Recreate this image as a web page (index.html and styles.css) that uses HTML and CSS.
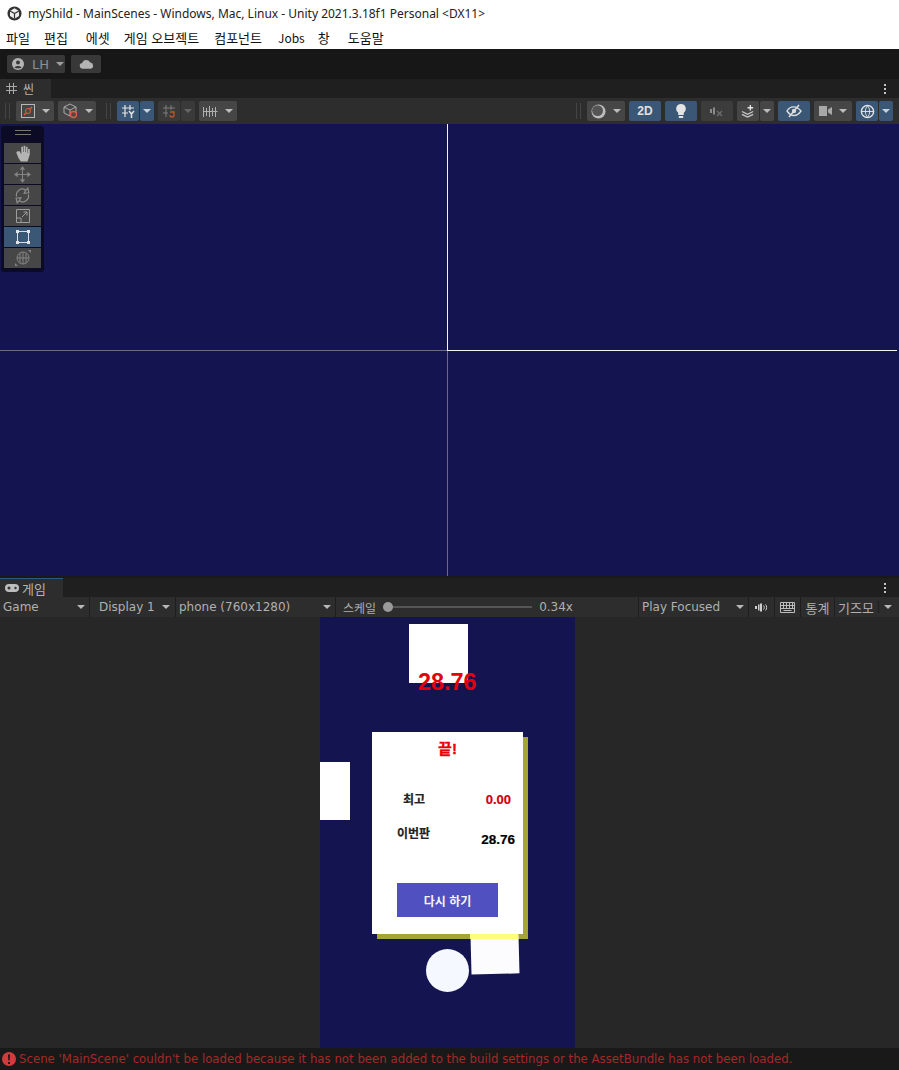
FILE: index.html
```html
<!DOCTYPE html>
<html lang="ko">
<head>
    <meta charset="UTF-8" />
    <title>myShild - MainScenes - Unity</title>
    <link rel="stylesheet" href="styles.css">
</head>
<body>

<header class="titlebar">
    <svg class="unity-logo" viewBox="0 0 16 16" width="15" height="15">
        <circle cx="8" cy="8" r="7.5" fill="#333"/>
        <path d="M8 2.500l4.800 2.800v5.400L8 13.500l-4.800-2.800V5.300z" fill="#eee"/>
        <path d="M8 8l4.800-2.700M8 8v5.500M8 8L3.200 5.300" stroke="#333" stroke-width="1.300"/>
    </svg>
    <span>myShild - MainScenes - Windows, Mac, Linux - Unity 2021.3.18f1 Personal &lt;DX11&gt;</span>
</header>
<nav class="menubar">
    <span class="m1">파일</span><span class="m2">편집</span><span class="m3">에셋</span><span class="m4">게임 오브젝트</span><span class="m5">컴포넌트</span><span class="m6">Jobs</span><span class="m7">창</span><span>도움말</span>
</nav>

<div class="maintoolbar">
    <div class="account">
        <svg viewBox="0 0 12 12" width="12" height="12"><circle cx="6" cy="6" r="6" fill="#b4b4b4"/><circle cx="6" cy="4.500" r="2" fill="#3a3a3a"/><path d="M2.500 9.500c1-2 6-2 7 0-1 1.200-6 1.200-7 0z" fill="#3a3a3a"/></svg>
        <span>LH</span><i class="caret"></i>
    </div>
    <div class="cloud">
        <svg viewBox="0 0 16 10" width="15" height="10"><path d="M4 10a3 3 0 0 1-.5-6A4.500 4.500 0 0 1 12 3.500 3.300 3.300 0 0 1 12.500 10z" fill="#b4b4b4"/></svg>
    </div>
</div>

<section class="panel-head scene-head">
    <div class="tab">
        <svg viewBox="0 0 11 11" width="11" height="11"><path d="M3.500 0v11M7.500 0v11M0 3.500h11M0 7.500h11" stroke="#aaa" fill="none"/></svg>
        <span>씬</span>
    </div>
    <div class="kebab"><b></b><b></b><b></b></div>
</section>

<div class="scene-toolbar">
    <i class="grip"></i>
    <div class="btn w38">
        <svg viewBox="0 0 14 14" width="14" height="14"><rect x=".5" y=".5" width="13" height="13" fill="none" stroke="#b8b8b8"/><path d="M3 11l8-8" stroke="#e0603c" stroke-width="1.200"/><circle cx="7" cy="7" r="2.500" fill="#464646" stroke="#e0603c"/></svg>
        <i class="caret"></i>
    </div>
    <div class="btn w38">
        <svg viewBox="0 0 16 16" width="16" height="16"><path d="M8 1l6 3v6l-6 3-6-3V4zM2 4l6 3 6-3M8 7v6" fill="none" stroke="#aaa"/><circle cx="11.500" cy="11.500" r="3" fill="#4a4a4a" stroke="#e0603c" stroke-width="1.300"/></svg>
        <i class="caret"></i>
    </div>
    <i class="grip grip-mid"></i>
    <div class="btn on w22">
        <svg viewBox="0 0 14 14" width="14" height="14"><path d="M4 1v12M9 1v5M1 4h12M1 9h6" stroke="#e4e4e4" fill="none" stroke-width="1.200"/><path d="M8 7l2.500 3L13 7M10.500 10v4" stroke="#e4e4e4" fill="none" stroke-width="1.500"/></svg>
    </div>
    <div class="btn on w14 sub"><i class="caret"></i></div>
    <div class="btn dim w22">
        <svg viewBox="0 0 14 14" width="14" height="14"><path d="M4 1v12M9 1v5M1 4h12M1 9h5" stroke="#7c7c7c" fill="none"/><path d="M8 8h4v3a2 2 0 0 1-4 0" stroke="#c0552f" fill="none" stroke-width="1.300"/></svg>
    </div>
    <div class="btn dim w14 sub"><i class="caret"></i></div>
    <div class="btn w38">
        <svg viewBox="0 0 15 13" width="15" height="13"><path d="M.5 2v10M3.500 3v8M6.500 1v11M9.500 3v8M12.500 2v10M.5 6.500h14" stroke="#b0b0b0" fill="none"/></svg>
        <i class="caret"></i>
    </div>

    <div class="spacer"></div>

    <i class="grip"></i>
    <div class="btn w38">
        <svg viewBox="0 0 16 16" width="15" height="15"><circle cx="8" cy="8" r="7.500" fill="#bcbcbc"/><circle cx="7" cy="7" r="5.800" fill="#555"/></svg>
        <i class="caret"></i>
    </div>
    <div class="btn on w32 label-2d">2D</div>
    <div class="btn on w32">
        <svg viewBox="0 0 12 15" width="12" height="15"><path d="M6 0a4.800 4.800 0 0 1 2.800 8.700V11H3.200V8.700A4.800 4.800 0 0 1 6 0z" fill="#e4e4e4"/><rect x="3.800" y="12" width="4.400" height="2" fill="#e4e4e4"/></svg>
    </div>
    <div class="btn off w32">
        <svg viewBox="0 0 14 12" width="14" height="12"><path d="M0 4h2v4H0zM3 2.500h2v7H3z" fill="#8a8a8a"/><path d="M7 6l5 5M12 6l-5 5" stroke="#6e6e6e" stroke-width="1.300"/></svg>
    </div>
    <div class="btn w22">
        <svg viewBox="0 0 16 14" width="15" height="13"><path d="M1 7l6 3 6-3M1 10l6 3 6-3" fill="none" stroke="#c8c8c8" stroke-width="1.500"/><path d="M10 0v6M7 3h6" stroke="#e4e4e4" stroke-width="1.500"/></svg>
    </div>
    <div class="btn w14 sub"><i class="caret"></i></div>
    <div class="btn on w32">
        <svg viewBox="0 0 16 14" width="16" height="14"><path d="M1 7c3-5 9-6 14 0-4 6-10 6-14 0z" fill="none" stroke="#ddd" stroke-width="1.400"/><circle cx="8" cy="7" r="2.200" fill="#ddd"/><path d="M3 13L13 1" stroke="#ddd" stroke-width="1.500"/></svg>
    </div>
    <div class="btn w38">
        <svg viewBox="0 0 13 10" width="13" height="10"><rect width="8" height="10" fill="#a8a8a8"/><path d="M9 3.500l4-2.500v8l-4-2.500z" fill="#a8a8a8"/></svg>
        <i class="caret"></i>
    </div>
    <div class="btn on w22">
        <svg viewBox="0 0 16 16" width="15" height="15"><circle cx="8" cy="8" r="6.500" fill="none" stroke="#e4e4e4" stroke-width="1.500"/><path d="M1.500 8h13M8 2c-3 3-3 9 0 12M8 2c3 3 3 9 0 12" fill="none" stroke="#e4e4e4"/></svg>
    </div>
    <div class="btn on w14 sub"><i class="caret"></i></div>
</div>

<main class="scene-view">
    <i class="axis-v"></i>
    <i class="axis-h"></i>
    <i class="axis-v2"></i>
    <i class="axis-h2"></i>
    <div class="tools">
        <i class="tools-grip"></i>
        <div class="tool">
            <svg viewBox="0 0 16 16" width="18" height="18"><path d="M2 7.500l2 5 2 3h6l2-6V4.500h-1.500V8H12V2.500h-1.500V7H10V1.500H8.500V7H8V2.500H6.500V9L5 6.500H3z" fill="#b4b4b4"/></svg>
        </div>
        <div class="tool">
            <svg viewBox="0 0 16 16" width="17" height="17"><path d="M8 0l2.500 3.500h-5zM8 16l2.500-3.500h-5zM0 8l3.500-2.500v5zM16 8l-3.500-2.500v5z" fill="#858585"/><path d="M8 3v10M3 8h10" stroke="#858585"/></svg>
        </div>
        <div class="tool">
            <svg viewBox="0 0 16 16" width="17" height="17"><path d="M2.500 9A5.500 5.500 0 0 1 11 3l-1.500 3 4.500-.500L13 1l-1.500 2M13.500 7A5.500 5.500 0 0 1 5 13l1.500-3-4.500.500L3 15l1.500-2" fill="none" stroke="#8c8c8c" stroke-width="1.100"/></svg>
        </div>
        <div class="tool">
            <svg viewBox="0 0 14 14" width="14" height="14"><path d="M.5.5h13v13H.5zM.5 9H5v4.500M6 8l5-5M7.500 3H11v3.500" fill="none" stroke="#9c9c9c"/></svg>
        </div>
        <div class="tool on">
            <svg viewBox="0 0 14 14" width="14" height="14"><rect x="1.500" y="1.500" width="11" height="11" fill="none" stroke="#dde" /><path d="M0 0h3v3H0zM11 0h3v3h-3zM0 11h3v3H0zM11 11h3v3h-3z" fill="#e4e4e4"/></svg>
        </div>
        <div class="tool">
            <svg viewBox="0 0 18 18" width="18" height="18"><circle cx="9" cy="9" r="6" fill="none" stroke="#858585"/><path d="M3 9h12M9 3v12M6 4v10M12 4v10" stroke="#858585" fill="none"/><path d="M14 1h3v3zM1 17v-3l3 3z" fill="#858585"/></svg>
        </div>
    </div>
</main>

<section class="panel-head game-head">
    <div class="tab tab-game">
        <svg viewBox="0 0 14 9" width="14" height="9"><rect width="14" height="8" rx="4" fill="#bdbdbd"/><circle cx="4" cy="4" r="1.500" fill="#333"/><circle cx="10.500" cy="4" r="1.200" fill="#333"/></svg>
        <span>게임</span>
    </div>
    <div class="kebab"><b></b><b></b><b></b></div>
</section>

<div class="game-toolbar">
    <div class="cell c-game"><span>Game</span><i class="caret"></i></div>
    <div class="cell c-display"><span>Display 1</span><i class="caret"></i></div>
    <div class="cell c-phone"><span>phone (760x1280)</span><i class="caret"></i></div>
    <div class="cell c-scale">
        <span>스케일</span>
        <div class="slider"><i></i></div>
        <span class="scale-val">0.34x</span>
    </div>
    <div class="cell c-play"><span>Play Focused</span><i class="caret"></i></div>
    <div class="cell c-icon">
        <svg viewBox="0 0 13 9" width="13" height="9"><path d="M0 3h2v3H0zM3 1.500h1.500v6H3zM5 .5h2v8H5z" fill="#cfcfcf"/><path d="M8.500 2.500c1 1 1 3 0 4M10.500 1.500c1.500 1.500 1.500 4.500 0 6" fill="none" stroke="#cfcfcf"/></svg>
    </div>
    <div class="cell c-icon">
        <svg viewBox="0 0 15 11" width="15" height="11"><path d="M.5.5h14v10H.5zM.5 3.500h14M.5 6.500h14M3.500.5v6M6.500.5v6M9.500.5v6M12.500.5v6M3.500 8.500h8" fill="none" stroke="#bdbdbd"/></svg>
    </div>
    <div class="cell c-stats"><span>통계</span></div>
    <div class="cell c-gizmo"><span>기즈모</span><i class="sep"></i><i class="caret"></i></div>
</div>

<main class="game-view">
    <div class="screen">
        <div class="block block-top"></div>
        <div class="score">28.76</div>
        <div class="block block-left"></div>
        <div class="card-shadow"></div>
        <div class="block block-tilt"></div>
        <div class="block block-yellow"></div>
        <div class="ball"></div>
        <div class="card">
            <div class="card-title">끝!</div>
            <div class="card-row row-best">
                <span>최고</span>
                <span class="val-red">0.00</span>
            </div>
            <div class="card-row row-now">
                <span>이번판</span>
                <span class="val-black">28.76</span>
            </div>
            <div class="retry">다시 하기</div>
        </div>
    </div>
</main>

<footer class="statusbar">
    <svg viewBox="0 0 14 14" width="14" height="14"><circle cx="7" cy="7" r="7" fill="#d13b3b"/><path d="M6 2.500h2l-.3 6H6.300zM6 10h2v2H6z" fill="#1a1a1a"/></svg>
    <span>Scene 'MainScene' couldn't be loaded because it has not been added to the build settings or the AssetBundle has not been loaded.</span>
</footer>

</body>
</html>
```

FILE: styles.css
```css
html, body {
    margin: 0;
    padding: 0;
}
body {
    width: 899px;
    height: 1070px;
    overflow: hidden;
    background: #191919;
    font-family: "DejaVu Sans", "Noto Sans CJK KR", sans-serif;
    font-size: 12px;
    color: #b4b4b4;
}
svg {
    display: block;
    flex: none;
}

/* windows title + menu */
.titlebar {
    height: 26px;
    background: #fff;
    color: #222;
    display: flex;
    align-items: center;
    gap: 6px;
    padding-left: 7px;
    font-family: "Noto Sans", "Noto Sans CJK KR", sans-serif;
    font-size: 12px;
}
.menubar {
    height: 23px;
    background: #fff;
    color: #111;
    display: flex;
    align-items: center;
    padding-left: 6px;
    font-family: "Noto Sans CJK KR", sans-serif;
    font-size: 13px;
}
.m1 { margin-right: 14px; }
.m2 { margin-right: 18px; }
.m3 { margin-right: 14px; }
.m4 { margin-right: 15px; }
.m5 { margin-right: 16px; }
.m6 { margin-right: 13px; font-size: 12px; }
.m7 { margin-right: 18px; }

.caret {
    display: block;
    flex: none;
    width: 0;
    height: 0;
    border-left: 4px solid transparent;
    border-right: 4px solid transparent;
    border-top: 4px solid #b8b8b8;
}

.maintoolbar {
    height: 30px;
    background: #171717;
    display: flex;
    align-items: center;
    gap: 6px;
    padding-left: 7px;
}
.account, .cloud {
    height: 18px;
    background: #383838;
    border-radius: 2px;
    display: flex;
    align-items: center;
    box-sizing: border-box;
}
.account {
    width: 58px;
    padding-left: 5px;
    gap: 8px;
    color: #8f8f8f;
    font-size: 13px;
}
.account .caret {
    margin-left: -1px;
    border-top-color: #a0a0a0;
}
.cloud {
    width: 30px;
    justify-content: center;
}

/* panel tabs */
.panel-head {
    height: 19px;
    background: #1f1f1f;
    display: flex;
    justify-content: space-between;
    align-items: stretch;
}
.tab {
    width: 51px;
    background: #2d2d2d;
    display: flex;
    align-items: center;
    gap: 6px;
    padding-left: 6px;
    box-sizing: border-box;
    font-family: "Noto Sans CJK KR", sans-serif;
}
.tab-game {
    width: 63px;
    padding-left: 5px;
    gap: 3px;
    border-top: 1px solid #2f5a7d;
    font-size: 13px;
}
.kebab {
    width: 29px;
    display: flex;
    flex-direction: column;
    align-items: center;
    justify-content: center;
    gap: 2px;
}
.kebab b {
    width: 2px;
    height: 2px;
    background: #c4c4c4;
}

.scene-toolbar {
    height: 26px;
    background: #2d2d2d;
    display: flex;
    align-items: center;
    padding-left: 5px;
    padding-right: 6px;
    box-sizing: border-box;
    gap: 4px;
}
.spacer {
    flex: 1;
}
.grip {
    width: 3px;
    height: 16px;
    border-left: 1px solid #444;
    border-right: 1px solid #444;
    margin-right: 2px;
}
.grip-mid {
    margin-left: 6px;
}
.btn {
    height: 20px;
    background: #464646;
    border-radius: 2px;
    display: flex;
    align-items: center;
    justify-content: center;
    gap: 7px;
    box-sizing: border-box;
    flex: none;
}
.btn.on { background: #3a5775; }
.btn.dim { background: #3a3a3a; }
.btn.off { background: #3c3c3c; }
.btn.dim .caret { border-top-color: #666; }
.btn .caret { border-top-color: #bcbcbc; }
.btn.on .caret { border-top-color: #c8d2dc; }
.w14 { width: 14px; }
.w22 { width: 22px; }
.w32 { width: 32px; }
.w38 { width: 38px; }
.sub { margin-left: -3px; }
.label-2d {
    color: #e0e0e0;
    font-family: "Liberation Sans", sans-serif;
    font-size: 12px;
    font-weight: bold;
}

/* scene view */
.scene-view {
    height: 452px;
    background: #141450;
    position: relative;
    margin-bottom: 2px;
}
.axis-v {
    position: absolute;
    left: 447px;
    top: 0;
    height: 227px;
    width: 1px;
    background: #f4f4f4;
}
.axis-h {
    position: absolute;
    left: 447px;
    top: 226px;
    width: 450px;
    height: 1px;
    background: #f4f4f4;
}
.axis-v2 {
    position: absolute;
    left: 447px;
    top: 227px;
    bottom: 0;
    width: 1px;
    background: #6a6a88;
}
.axis-h2 {
    position: absolute;
    left: 0;
    top: 226px;
    width: 447px;
    height: 1px;
    background: #6a6a88;
}
.tools {
    position: absolute;
    left: 1px;
    top: 2px;
    width: 43px;
    height: 146px;
    background: #0b0b26;
    border-radius: 3px;
    display: flex;
    flex-direction: column;
    align-items: center;
    padding-top: 4px;
    box-sizing: border-box;
    gap: 1px;
}
.tools-grip {
    width: 16px;
    height: 3px;
    border-top: 1px solid #777;
    border-bottom: 1px solid #777;
    margin-bottom: 7px;
}
.tool {
    width: 37px;
    height: 20px;
    background: #464646;
    display: flex;
    align-items: center;
    justify-content: center;
}
.tool.on {
    background: #3a5775;
}

/* game panel */
.game-toolbar {
    height: 20px;
    background: #2d2d2d;
    display: flex;
    align-items: center;
    font-size: 12px;
    color: #b0b0b0;
}
.cell {
    height: 20px;
    display: flex;
    align-items: center;
    box-sizing: border-box;
    border-right: 1px solid #1e1e1e;
    justify-content: space-between;
    flex: none;
}
.c-game { width: 90px; padding: 0 4px 0 3px; }
.c-display { width: 86px; padding: 0 5px 0 9px; }
.c-phone { width: 160px; padding: 0 4px 0 3px; }
.c-scale {
    width: 303px;
    padding: 0 0 0 7px;
    justify-content: flex-start;
    border-right: 1px solid #1e1e1e;
}
.c-play { width: 110px; padding: 0 4px 0 3px; }
.c-icon { width: 26px; justify-content: center; }
.c-stats {
    width: 34px;
    justify-content: center;
    font-family: "Noto Sans CJK KR", sans-serif;
    font-size: 13px;
}
.c-gizmo {
    flex: 1;
    padding: 0 7px 0 3px;
    border-right: none;
    font-family: "Noto Sans CJK KR", sans-serif;
    font-size: 13px;
}
.sep {
    width: 1px;
    height: 12px;
    background: #1e1e1e;
}
.slider {
    width: 149px;
    height: 2px;
    background: #555;
    position: relative;
    margin: 0 7px;
}
.slider i {
    position: absolute;
    left: 0;
    top: -4px;
    width: 10px;
    height: 10px;
    border-radius: 50%;
    background: #9a9a9a;
}
.game-view {
    height: 431px;
    background: #272727;
    display: flex;
    justify-content: center;
    padding-right: 4px;
    box-sizing: border-box;
}
.screen {
    width: 255px;
    height: 100%;
    background: #141450;
    position: relative;
    overflow: hidden;
    font-family: "Liberation Sans", "Noto Sans CJK KR", sans-serif;
}
.block, .ball, .card, .card-shadow, .score {
    position: absolute;
}
.block {
    background: #fff;
}
.block-top {
    left: 89px;
    top: 7px;
    width: 59px;
    height: 59px;
}
.score {
    left: 98px;
    top: 51px;
    color: #e0000f;
    font-size: 23.4px;
    font-weight: bold;
    line-height: 28px;
}
.block-left {
    left: 0;
    top: 145px;
    width: 30px;
    height: 58px;
}
.block-yellow {
    left: 150px;
    top: 310px;
    width: 48px;
    height: 12px;
    background: #ffff78;
}
.block-tilt {
    left: 151px;
    top: 318px;
    width: 48px;
    height: 39px;
    background: #fcfcff;
    transform: rotate(-1.500deg);
}
.ball {
    left: 106px;
    top: 332px;
    width: 43px;
    height: 43px;
    border-radius: 50%;
    background: #f6f8ff;
}
.card-shadow {
    left: 57px;
    top: 120px;
    width: 151px;
    height: 202px;
    background: #a5a535;
}
.card {
    left: 52px;
    top: 115px;
    width: 151px;
    height: 202px;
    background: #fff;
    font-weight: bold;
    color: #222;
}
.card-title {
    position: absolute;
    left: 0;
    right: 0;
    top: 6px;
    text-align: center;
    color: #e6000a;
    font-size: 15px;
    line-height: 22px;
    -webkit-text-stroke: .3px #e6000a;
}
.card-row {
    position: absolute;
    display: flex;
    justify-content: space-between;
    font-size: 12px;
    -webkit-text-stroke: .2px currentColor;
}
.row-best {
    left: 31px;
    right: 12px;
    top: 59px;
    align-items: center;
    line-height: 18px;
}
.row-now {
    left: 25px;
    right: 8px;
    top: 93px;
    line-height: 18px;
}
.val-red {
    color: #d0000c;
    font-size: 13px;
}
.val-black {
    color: #000;
    font-size: 13.5px;
    margin-top: 6px;
}
.retry {
    position: absolute;
    left: 25px;
    top: 151px;
    width: 101px;
    height: 34px;
    background: #5050c0;
    color: #f4f4f4;
    display: flex;
    align-items: center;
    justify-content: center;
    font-size: 12px;
}

.statusbar {
    height: 22px;
    background: #191919;
    color: #a32a2a;
    display: flex;
    align-items: center;
    gap: 3px;
    padding-left: 2px;
    font-size: 11.76px;
    white-space: nowrap;
}
```
